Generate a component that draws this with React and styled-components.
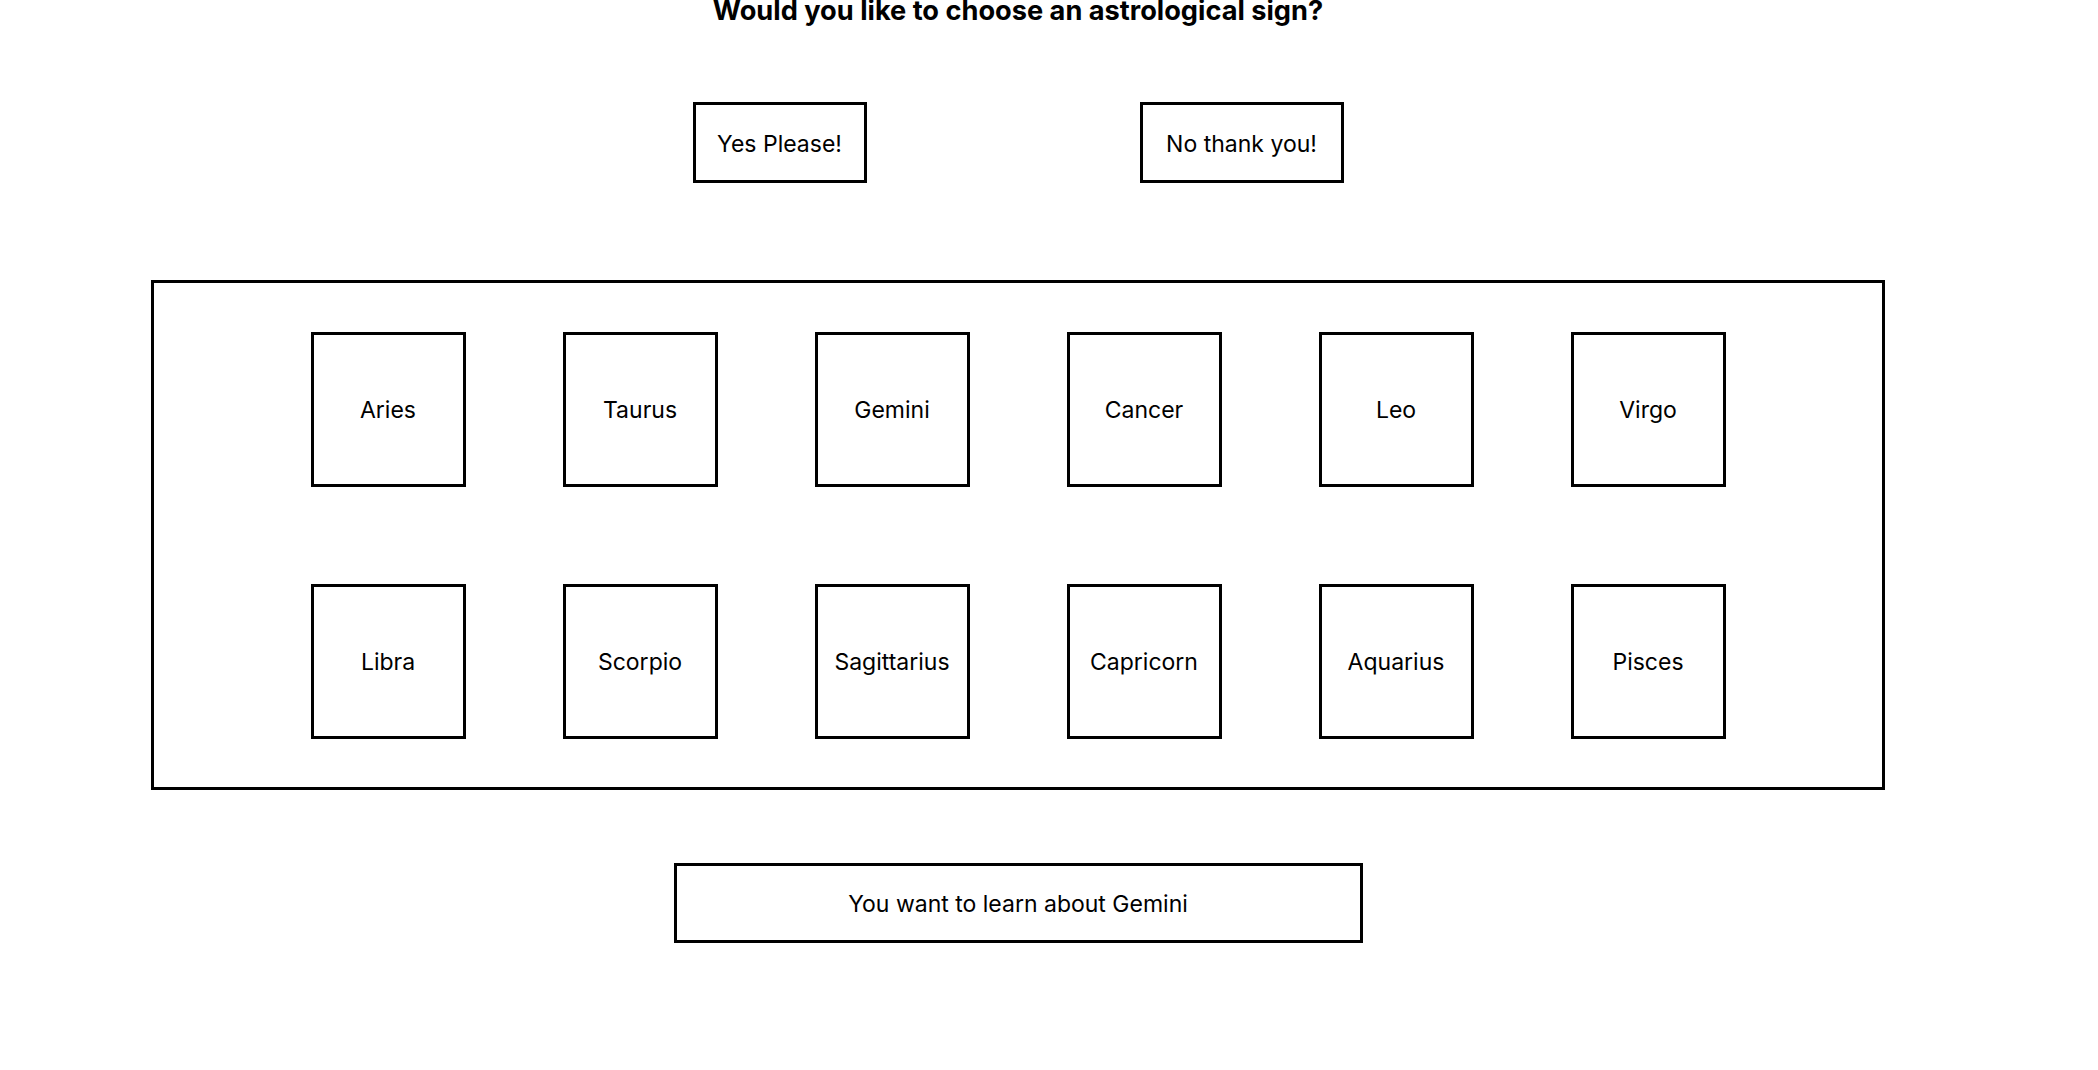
import React, { useState } from "react";
import styled, { createGlobalStyle } from "styled-components";

const GlobalStyle = createGlobalStyle`
  html, body {
    margin: 0;
    padding: 0;
    background: #ffffff;
  }
  body {
    font-family: Inter, "Noto Sans", "Liberation Sans", sans-serif;
    color: #000;
  }
`;

const Page = styled.div`
  width: 2036px;
  display: flex;
  flex-direction: column;
  align-items: center;
  box-sizing: border-box;
`;

const Title = styled.h2`
  margin: -6px 0 0;
  font-size: 27.2px;
  font-weight: 700;
  line-height: 33px;
`;

const ChoiceRow = styled.div`
  display: flex;
  gap: 273px;
  margin-top: 75px;
`;

const OutlineButton = styled.button`
  box-sizing: border-box;
  height: 81px;
  width: ${(p) => p.$w}px;
  border: 3px solid #000;
  background: #fff;
  font-family: inherit;
  font-size: 23px;
  color: #000;
  display: flex;
  align-items: center;
  justify-content: center;
  padding: 2px 0 0;
  cursor: pointer;
`;

const Panel = styled.div`
  box-sizing: border-box;
  margin-top: 97px;
  width: 1734px;
  height: 510px;
  border: 3px solid #000;
  display: grid;
  grid-template-columns: repeat(6, 155px);
  grid-auto-rows: 155px;
  column-gap: 97px;
  row-gap: 97px;
  justify-content: center;
  align-content: center;
`;

const SignBox = styled.button`
  box-sizing: border-box;
  width: 155px;
  height: 155px;
  border: 3px solid #000;
  background: #fff;
  font-family: inherit;
  font-size: 23px;
  color: #000;
  display: flex;
  align-items: center;
  justify-content: center;
  padding: 2px 0 0;
  cursor: pointer;
`;

const Result = styled.div`
  box-sizing: border-box;
  margin-top: 73px;
  width: 689px;
  height: 80px;
  border: 3px solid #000;
  font-size: 23px;
  display: flex;
  align-items: center;
  justify-content: center;
  padding-top: 2px;
`;

const SIGNS = [
  "Aries",
  "Taurus",
  "Gemini",
  "Cancer",
  "Leo",
  "Virgo",
  "Libra",
  "Scorpio",
  "Sagittarius",
  "Capricorn",
  "Aquarius",
  "Pisces",
];

export default function App() {
  const [sign, setSign] = useState("Gemini");
  return (
    <>
      <GlobalStyle />
      <Page>
        <Title>Would you like to choose an astrological sign?</Title>
        <ChoiceRow>
          <OutlineButton $w={174}>Yes Please!</OutlineButton>
          <OutlineButton $w={204}>No thank you!</OutlineButton>
        </ChoiceRow>
        <Panel>
          {SIGNS.map((s) => (
            <SignBox key={s} onClick={() => setSign(s)}>
              {s}
            </SignBox>
          ))}
        </Panel>
        <Result>You want to learn about {sign}</Result>
      </Page>
    </>
  );
}
